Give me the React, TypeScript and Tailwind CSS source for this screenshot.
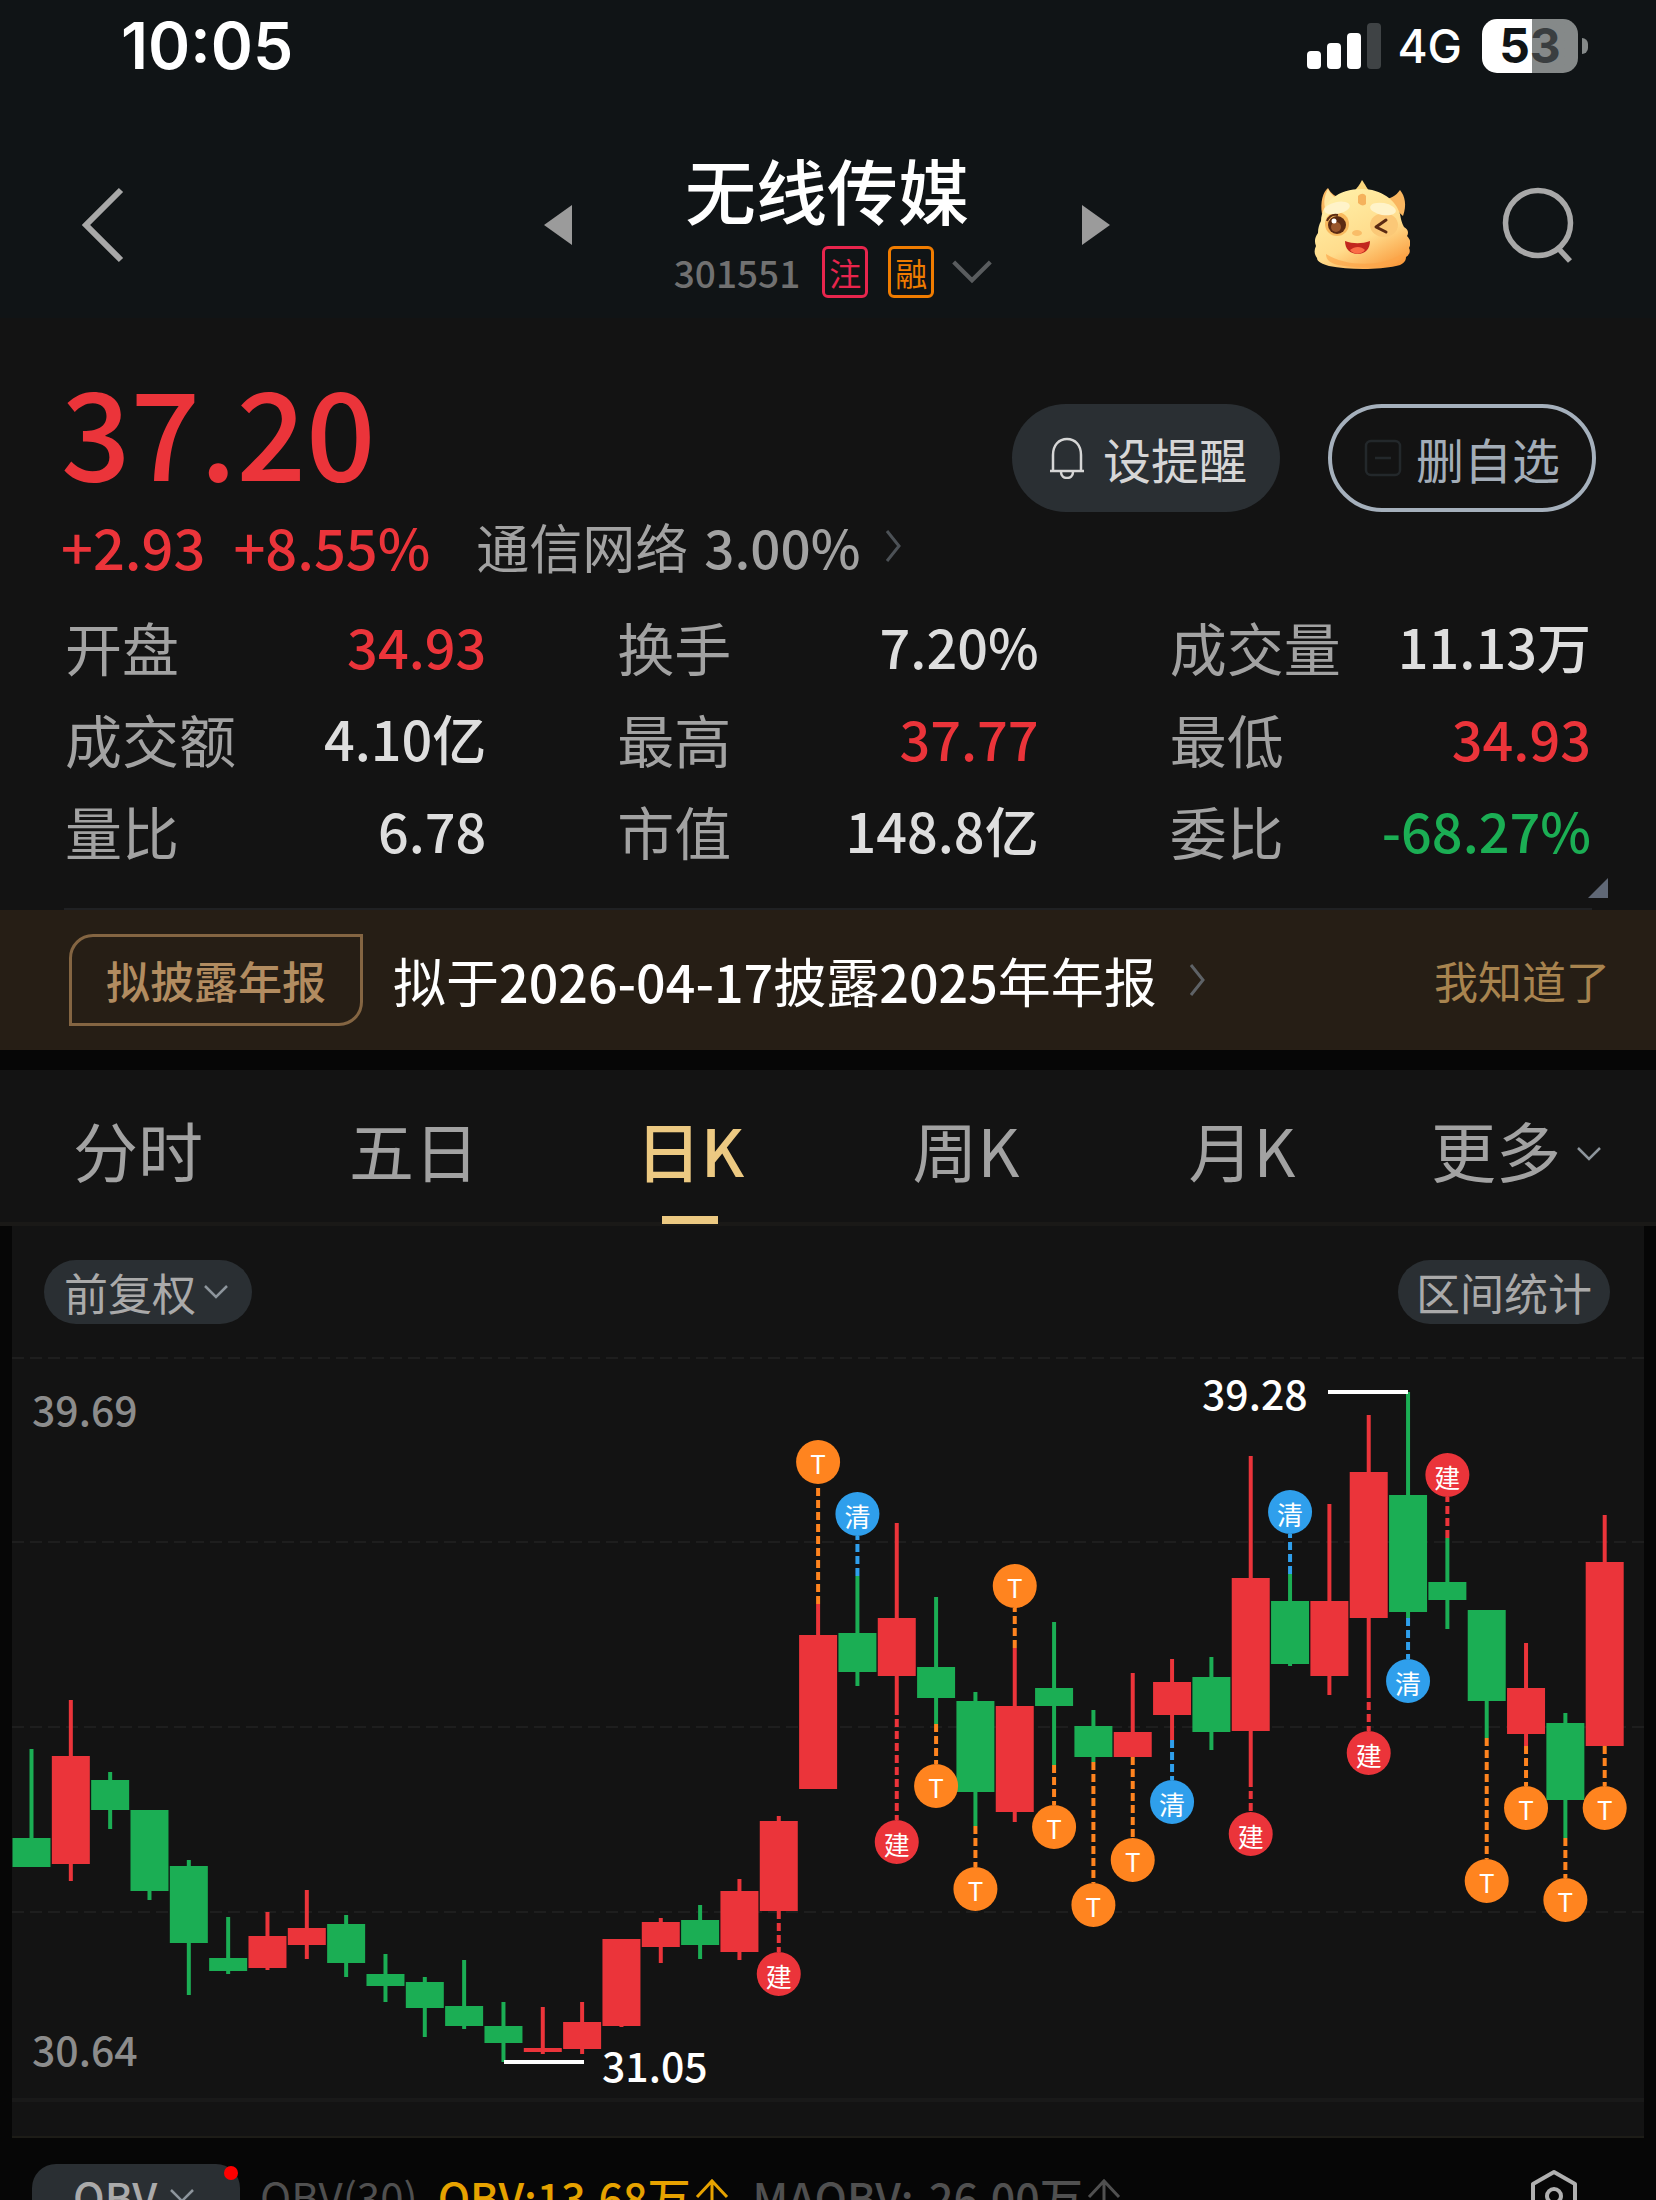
import { useState } from 'react';

const stats = [
  { label: '开盘', value: '34.93', color: 'text-[#eb343a]' },
  { label: '换手', value: '7.20%', color: 'text-[#dedede]' },
  { label: '成交量', value: '11.13万', color: 'text-[#dedede]' },
  { label: '成交额', value: '4.10亿', color: 'text-[#dedede]' },
  { label: '最高', value: '37.77', color: 'text-[#eb343a]' },
  { label: '最低', value: '34.93', color: 'text-[#eb343a]' },
  { label: '量比', value: '6.78', color: 'text-[#dedede]' },
  { label: '市值', value: '148.8亿', color: 'text-[#dedede]' },
  { label: '委比', value: '-68.27%', color: 'text-[#1bae54]' },
];

const tabs = ['分时', '五日', '日K', '周K', '月K', '更多'];

const RED = '#eb343a';
const GREEN = '#1bae54';

const markColors: Record<string, string> = { T: '#ff841f', 清: '#2f9fec', 建: RED };

type Candle = {
  up: boolean;
  high: number;
  top: number;
  bottom: number;
  low: number;
  mark?: string;
  markY?: number;
};

// y values in chart units, growing downwards
const candles: Candle[] = [
  { up: false, high: 449, top: 538, bottom: 567, low: 567 },
  { up: true, high: 400, top: 456, bottom: 564, low: 581 },
  { up: false, high: 472, top: 480, bottom: 510, low: 529 },
  { up: false, high: 510, top: 510, bottom: 591, low: 600 },
  { up: false, high: 560, top: 566, bottom: 643, low: 695 },
  { up: false, high: 617, top: 658, bottom: 671, low: 674 },
  { up: true, high: 612, top: 636, bottom: 668, low: 670 },
  { up: true, high: 590, top: 628, bottom: 645, low: 659 },
  { up: false, high: 615, top: 624, bottom: 663, low: 677 },
  { up: false, high: 654, top: 674, bottom: 686, low: 702 },
  { up: false, high: 677, top: 682, bottom: 708, low: 737 },
  { up: false, high: 660, top: 706, bottom: 726, low: 729 },
  { up: false, high: 702, top: 726, bottom: 743, low: 762 },
  { up: true, high: 707, top: 748, bottom: 752, low: 754 },
  { up: true, high: 702, top: 722, bottom: 749, low: 754 },
  { up: true, high: 639, top: 639, bottom: 726, low: 727 },
  { up: true, high: 618, top: 622, bottom: 647, low: 663 },
  { up: false, high: 605, top: 620, bottom: 645, low: 659 },
  { up: true, high: 579, top: 591, bottom: 652, low: 660 },
  { up: true, high: 516, top: 521, bottom: 611, low: 611, mark: '建', markY: 674 },
  { up: true, high: 304, top: 335, bottom: 489, low: 489, mark: 'T', markY: 162 },
  { up: false, high: 276, top: 333, bottom: 372, low: 386, mark: '清', markY: 214 },
  { up: true, high: 223, top: 318, bottom: 376, low: 407, mark: '建', markY: 542 },
  { up: false, high: 297, top: 367, bottom: 398, low: 424, mark: 'T', markY: 486 },
  { up: false, high: 392, top: 401, bottom: 492, low: 526, mark: 'T', markY: 589 },
  { up: true, high: 348, top: 406, bottom: 512, low: 522, mark: 'T', markY: 286 },
  { up: false, high: 322, top: 388, bottom: 406, low: 465, mark: 'T', markY: 527 },
  { up: false, high: 410, top: 426, bottom: 457, low: 462, mark: 'T', markY: 605 },
  { up: true, high: 373, top: 432, bottom: 457, low: 457, mark: 'T', markY: 560 },
  { up: true, high: 359, top: 382, bottom: 415, low: 440, mark: '清', markY: 502 },
  { up: false, high: 357, top: 377, bottom: 432, low: 450 },
  { up: true, high: 156, top: 278, bottom: 431, low: 479, mark: '建', markY: 534 },
  { up: false, high: 274, top: 301, bottom: 364, low: 366, mark: '清', markY: 212 },
  { up: true, high: 204, top: 301, bottom: 376, low: 395 },
  { up: true, high: 115, top: 172, bottom: 318, low: 390, mark: '建', markY: 453 },
  { up: false, high: 92, top: 195, bottom: 312, low: 318, mark: '清', markY: 381 },
  { up: false, high: 238, top: 282, bottom: 300, low: 329, mark: '建', markY: 175 },
  { up: false, high: 310, top: 310, bottom: 401, low: 438, mark: 'T', markY: 581 },
  { up: true, high: 343, top: 388, bottom: 434, low: 446, mark: 'T', markY: 508 },
  { up: false, high: 413, top: 423, bottom: 500, low: 538, mark: 'T', markY: 600 },
  { up: true, high: 215, top: 262, bottom: 446, low: 446, mark: 'T', markY: 508 },
];

const centerX = (index: number) => 19.5 + index * 39.33;

function Chevron({ className, down }: { className: string; down?: boolean }) {
  return down ? (
    <svg viewBox="0 0 24 14" fill="none" stroke="currentColor" strokeWidth="2.5" className={className} aria-hidden="true">
      <path d="M1 1l11 11L23 1" />
    </svg>
  ) : (
    <svg viewBox="0 0 16 32" fill="none" stroke="currentColor" strokeWidth="3" className={className} aria-hidden="true">
      <path d="M2 1l12 15L2 31" />
    </svg>
  );
}

function UpArrow() {
  return (
    <svg viewBox="0 0 34 36" fill="none" stroke="currentColor" strokeWidth="3" className="ml-1 w-[34px] h-9" aria-hidden="true">
      <path d="M17 2v33M2 19L17 3l15 16" />
    </svg>
  );
}

function StatusBar() {
  return (
    <div className="flex h-[92px] items-center justify-between pl-[121px] pr-[68px] font-['Inter',sans-serif] text-white">
      <span className="text-[64px] leading-[90px] font-semibold">10:05</span>
      <div className="flex items-center">
        <svg viewBox="0 0 74 46" className="w-[74px] h-[46px]" aria-hidden="true">
          <rect x="0" y="28" width="14" height="18" rx="4" fill="#fff" />
          <rect x="20" y="20" width="14" height="26" rx="4" fill="#fff" />
          <rect x="40" y="10" width="14" height="36" rx="4" fill="#fff" />
          <rect x="60" y="0" width="14" height="46" rx="4" fill="#3f4345" />
        </svg>
        <span className="ml-4 text-[46px] leading-[56px] font-medium">4G</span>
        <div className="ml-5 flex h-[54px] w-24 items-center justify-center rounded-[15px] bg-linear-to-r from-white from-52% to-[#858989] to-52% text-[48px] leading-[54px] font-bold">
          <span className="text-[#101416]">5</span>
          <span className="text-[#3a3e40]">3</span>
        </div>
        <span className="ml-1 h-4 w-1.5 rounded-r-full bg-[#858989]" />
      </div>
    </div>
  );
}

function Mascot() {
  return (
    <svg viewBox="0 0 96 90" className="w-[96px] h-[90px]" aria-hidden="true">
      <defs>
        <linearGradient id="skin" x1="0.2" y1="0" x2="0.8" y2="1">
          <stop offset="0" stopColor="#fff0a8" />
          <stop offset="0.6" stopColor="#ffdc8c" />
          <stop offset="1" stopColor="#fa9a3c" />
        </linearGradient>
      </defs>
      <path d="M8 34C6 22 9 12 14 8c3 6 8 9 14 10zM89 36c4-11 2-20-3-26-4 6-10 9-16 9z" fill="#f9b660" />
      <path d="M11 28C9 19 12 13 14 9c3 6 7 9 12 11z" fill="#ffe6a0" />
      <path d="M38 13C43 9 46 4 48 0c3 4 5 9 10 14z" fill="#fbd77d" />
      <path d="M48 9c19 0 34 11 38 25 1 6 2 9 4 13 4 2 5 6 3 9 4 4 4 8 2 12 2 4 0 7-3 9 0 5-4 8-10 9-18 4-47 4-67 0-6-2-12-4-12-8-3-4-3-8-1-12-2-5-1-9 2-13 0-5 1-8 3-12C8 22 24 9 48 9z" fill="url(#skin)" />
      <path d="M12 74c20 13 56 13 76 0-2 8-8 11-18 12-16 2-30 2-46-1-8-2-12-5-12-11z" fill="#fca448" opacity="0.65" />
      <path d="M44 16c3-3 6-3 8 0v8c-2 2-5 2-8-1z" fill="#f5b25c" />
      <ellipse cx="23" cy="44" rx="12" ry="12" fill="#f8b95e" />
      <ellipse cx="70" cy="45" rx="14" ry="12" fill="#fbc877" />
      <ellipse cx="23" cy="28" rx="13" ry="6" fill="#fff3c9" transform="rotate(-12 23 28)" />
      <ellipse cx="69" cy="29" rx="13" ry="6" fill="#fff3c9" transform="rotate(10 69 29)" />
      <ellipse cx="23" cy="45" rx="9" ry="9" fill="#5b2a12" />
      <ellipse cx="22" cy="47" rx="5" ry="5" fill="#99562c" />
      <circle cx="20" cy="41" r="2.5" fill="#fff" />
      <path d="M13 41c2-5 6-7 11-6" fill="none" stroke="#5b2a12" strokeWidth="2" />
      <path d="M72 40l-10 7 10 5" fill="none" stroke="#5b2a12" strokeWidth="3" strokeLinecap="round" strokeLinejoin="round" />
      <ellipse cx="43" cy="53" rx="5" ry="3" fill="#f9bd68" />
      <path d="M31 61c8 3 17 3 25 0 0 8-5 13-12 13-8 0-13-5-13-13z" fill="#c2261e" />
      <path d="M36 70c5-4 11-4 15 0-4 5-11 5-15 0z" fill="#fb6c46" />
    </svg>
  );
}

function Header() {
  return (
    <header className="bg-[#101416]">
      <StatusBar />
      <div className="grid h-[226px] grid-cols-[1fr_auto_1fr] items-center pt-[54px] pb-3.5 pl-[80px] pr-[82px]">
        <button aria-label="返回" className="justify-self-start text-[#a8a8a8]">
          <svg viewBox="0 0 46 76" fill="none" stroke="currentColor" strokeWidth="6" className="w-[46px] h-[76px]">
            <path d="M41 3L6 38l35 35" />
          </svg>
        </button>
        <div className="flex w-[566px] items-center justify-between">
          <button aria-label="上一只" className="text-[#9b9b9b]">
            <svg viewBox="0 0 28 40" fill="currentColor" className="w-7 h-10">
              <path d="M28 0v40L0 20z" />
            </svg>
          </button>
          <div className="flex flex-col items-center pb-1.5">
            <h1 className="text-[71px] leading-[84px] font-medium text-white mb-4">无线传媒</h1>
            <div className="flex items-center pl-3">
              <span className="text-[37px] leading-[52px] font-medium text-[#717171] mr-[22px]">301551</span>
              <span className="w-[46px] h-[52px] rounded-md border-3 border-[#e8254d] text-[#e8254d] text-[32px] leading-[46px] text-center mr-5">注</span>
              <span className="w-[46px] h-[52px] rounded-md border-3 border-[#f07c00] text-[#f07c00] text-[32px] leading-[46px] text-center">融</span>
              <Chevron down className="ml-[18px] w-10 h-6 text-[#595c5e]" />
            </div>
          </div>
          <button aria-label="下一只" className="text-[#9b9b9b]">
            <svg viewBox="0 0 28 40" fill="currentColor" className="w-7 h-10">
              <path d="M0 0v40l28-20z" />
            </svg>
          </button>
        </div>
        <div className="flex items-center justify-self-end gap-[92px]">
          <button aria-label="智能助手">
            <Mascot />
          </button>
          <button aria-label="搜索" className="text-[#a8a8a8]">
            <svg viewBox="0 0 72 76" fill="none" stroke="currentColor" strokeWidth="5.5" className="w-[72px] h-[76px]">
              <circle cx="36" cy="36" r="32.5" />
              <path d="M56 61l12 13" />
            </svg>
          </button>
        </div>
      </div>
    </header>
  );
}

function Quote() {
  return (
    <section className="relative pt-[46px]">
      <div className="flex justify-between pl-[61px] pr-[60px]">
        <div>
          <div className="text-[122px] leading-[128px] font-medium text-[#eb343a] mb-[18px]">37.20</div>
          <div className="flex items-center leading-[72px] text-[56px]">
            <span className="text-[#eb343a] font-medium mr-7">+2.93</span>
            <span className="text-[#eb343a] font-medium mr-[46px]">+8.55%</span>
            <a href="#sector" className="flex items-center text-[53px] text-[#a2a2a2]">
              通信网络
              <span className="ml-4 font-medium">3.00%</span>
              <Chevron className="ml-6 w-4 h-9 text-[#4c5156]" />
            </a>
          </div>
        </div>
        <div className="flex items-start gap-12 pt-10 text-[48px] leading-[108px]">
          <button className="flex h-[108px] w-[268px] items-center justify-center gap-[18px] rounded-full bg-[#2a2f33] pl-1 text-[#d6d6d6]">
            <svg viewBox="0 0 36 42" fill="none" stroke="currentColor" strokeWidth="2.5" className="w-9 h-[42px]" aria-hidden="true">
              <path d="M1 34h34M4 34V18C4 8 10 2 18 2s14 6 14 16v16M12 35c0 4 3 6 6 6s6-2 6-6" />
            </svg>
            设提醒
          </button>
          <button className="flex h-[108px] w-[268px] items-center justify-center gap-3.5 rounded-full border-4 border-[#a5b0bc] text-[#a3adb8]">
            <svg viewBox="0 0 38 38" fill="none" stroke="#23282b" strokeWidth="2.5" className="w-[38px] h-[38px]" aria-hidden="true">
              <rect x="2" y="2" width="34" height="34" rx="5" />
              <path d="M11 19h16" />
            </svg>
            删自选
          </button>
        </div>
      </div>
      <dl className="mt-[18px] grid grid-cols-3 gap-x-[131px] px-[65px] pb-8 leading-[92px]">
        {stats.map((item) => (
          <div key={item.label} className="flex justify-between">
            <dt className="text-[57px] text-[#a2a2a2]">{item.label}</dt>
            <dd className={`text-[54px] font-medium ${item.color}`}>{item.value}</dd>
          </div>
        ))}
      </dl>
      <svg viewBox="0 0 20 20" className="absolute right-12 bottom-3 w-5 h-5" aria-hidden="true">
        <path d="M20 0v20H0z" fill="#606876" />
      </svg>
      <div className="mx-[64px] h-0.5 bg-[#202123]" />
    </section>
  );
}

function Notice() {
  return (
    <section className="flex h-[140px] items-center bg-[#261e15] pl-[69px] pr-[46px]">
      <span className="flex h-[92px] w-[294px] items-center justify-center rounded-tl-3xl rounded-br-3xl border-3 border-[#846542] text-[44px] leading-[60px] font-medium text-[#b28c60]">
        拟披露年报
      </span>
      <a href="#report" className="ml-[30px] flex items-center text-[53px] leading-[72px] text-white">
        <span>
          拟于<span className="text-[52px] font-medium">2026-04-17</span>披露<span className="text-[52px] font-medium">2025</span>年年报
        </span>
        <Chevron className="ml-8 w-4 h-8 text-[#5e6266]" />
      </a>
      <button className="ml-auto text-[44px] leading-[60px] text-[#a8844f]">我知道了</button>
    </section>
  );
}

function Tabs() {
  const [active, setActive] = useState('日K');

  return (
    <nav className="mt-5 grid h-[156px] grid-cols-6 border-b-4 border-[#1a1917] bg-[#131313]">
      {tabs.map((tab) => (
        <button
          key={tab}
          onClick={() => setActive(tab)}
          className={`relative flex items-center justify-center pt-1.5 text-[65px] leading-[88px] ${
            active === tab ? 'text-[#ecc982] font-medium' : 'text-[#a2a2a2]'
          }`}
        >
          {tab}
          {tab === '更多' && <Chevron down className="mt-2.5 ml-4 mr-1 w-6 h-3.5 text-[#8d959c]" />}
          {active === tab && <span className="absolute -bottom-0.5 h-2 w-14 bg-[#ecc982]" />}
        </button>
      ))}
    </nav>
  );
}

function KLine() {
  return (
    <svg viewBox="0 40 1632 796" className="block w-full h-auto" role="img" aria-label="日K">
      {[58, 242, 427, 612].map((y) => (
        <line key={y} x1="0" x2="1632" y1={y} y2={y} stroke="#1e1e1e" strokeWidth="2" strokeDasharray="12 6" />
      ))}
      <line x1="0" x2="1632" y1="800" y2="800" stroke="#191919" strokeWidth="4" />
      {candles.map((candle, index) => {
        const x = centerX(index);
        const color = candle.up ? RED : GREEN;
        return (
          <g key={index}>
            <line x1={x} x2={x} y1={candle.high} y2={candle.low} stroke={color} strokeWidth="4" />
            <rect x={x - 19} y={candle.top} width="38" height={candle.bottom - candle.top} fill={color} />
          </g>
        );
      })}
      {candles.map((candle, index) => {
        if (!candle.mark || candle.markY === undefined) return null;
        const x = centerX(index);
        const color = markColors[candle.mark];
        const above = candle.markY < candle.high;
        return (
          <g key={index}>
            <line
              x1={x}
              x2={x}
              y1={above ? candle.high : candle.low}
              y2={above ? candle.markY + 22 : candle.markY - 22}
              stroke={color}
              strokeWidth="4"
              strokeDasharray="8 4"
            />
            <circle cx={x} cy={candle.markY} r="22" fill={color} />
            <text x={x} y={candle.markY + (candle.mark === 'T' ? 12 : 13)} textAnchor="middle" fontSize="26" fill="#fff">
              {candle.mark}
            </text>
          </g>
        );
      })}
      <path d="M1316 92h80M492 762h80" stroke="#fff" strokeWidth="4" />
      <g fontSize="41" fontWeight="500">
        <text x="20" y="126" fill="#8c8c8c">39.69</text>
        <text x="20" y="766" fill="#8c8c8c">30.64</text>
        <text x="1190" y="110" fill="#fff">39.28</text>
        <text x="590" y="782" fill="#fff">31.05</text>
      </g>
    </svg>
  );
}

function ChartPanel() {
  return (
    <section className="mx-3 border-b-2 border-[#1d1c17] bg-[#131313]">
      <div className="flex items-center justify-between pl-8 pr-[34px] pt-[34px] pb-4">
        <label className="relative flex items-center">
          <select
            aria-label="复权方式"
            className="h-16 w-[208px] appearance-none rounded-full bg-[#2a2f33] pl-5 text-[44px] leading-[60px] text-[#aaaaaa]"
          >
            <option>前复权</option>
            <option>后复权</option>
            <option>不复权</option>
          </select>
          <Chevron down className="pointer-events-none absolute right-6 w-6 h-3.5 text-[#8d959c]" />
        </label>
        <button className="h-16 w-[212px] rounded-full bg-[#2a2f33] text-[44px] leading-[60px] text-[#aaaaaa]">区间统计</button>
      </div>
      <KLine />
    </section>
  );
}

function IndicatorBar() {
  return (
    <section className="flex items-center pl-8 pr-[78px] pt-[26px] text-[42px] leading-[64px] whitespace-nowrap">
      <label className="relative flex items-center">
        <select
          aria-label="指标"
          className="h-16 w-[208px] appearance-none rounded-3xl bg-[#2a2f33] pl-[41px] text-[42px] leading-[60px] font-medium text-[#aaaaaa]"
        >
          <option>OBV</option>
          <option>MACD</option>
          <option>KDJ</option>
        </select>
        <Chevron down className="pointer-events-none absolute right-[46px] w-6 h-3.5 text-[#8d959c]" />
        <span className="absolute top-0.5 right-0.5 w-3.5 h-3.5 rounded-full bg-[#ff0000]" />
      </label>
      <span className="ml-5 text-[#505050]">OBV(30)</span>
      <span className="ml-5 flex items-center text-[43px] font-medium text-[#e6a200]">
        OBV:13.68万
        <UpArrow />
      </span>
      <span className="ml-6 flex items-center text-[43px] font-medium text-[#505050]">
        MAOBV:-26.00万
        <UpArrow />
      </span>
      <button aria-label="指标设置" className="ml-auto text-[#b0b0b0]">
        <svg viewBox="0 0 48 54" fill="none" stroke="currentColor" strokeWidth="4" className="w-[48px] h-[54px]">
          <path d="M24 3l21 12v24L24 51 3 39V15z" strokeLinejoin="round" />
          <circle cx="24" cy="27" r="7" />
        </svg>
      </button>
    </section>
  );
}

export default function App() {
  return (
    <div className="h-screen overflow-hidden bg-[#060606] font-['Noto_Sans_CJK_SC',sans-serif]">
      <Header />
      <main>
        <div className="bg-[#131313]">
          <Quote />
        </div>
        <Notice />
        <Tabs />
        <ChartPanel />
        <IndicatorBar />
      </main>
    </div>
  );
}
